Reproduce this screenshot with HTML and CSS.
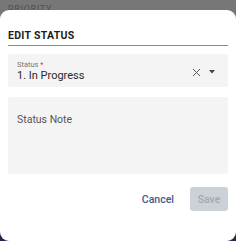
FILE: index.html
```html
<!DOCTYPE html>
<html lang="en">
  <head>
    <meta charset="UTF-8" />
    <meta name="viewport" content="width=device-width, initial-scale=1.0" />
    <title>Edit status</title>
    <link rel="stylesheet" href="styles.css">
  </head>
  <body>
    <div class="behind">
      <p class="behind-label">PRIORITY</p>
    </div>
    <section class="modal">
      <h2 class="title">EDIT STATUS</h2>
      <div class="field select">
        <div class="field-text">
          <p class="label">Status <span class="req">*</span></p>
          <p class="value">1. In Progress</p>
        </div>
        <svg class="clear" width="9" height="9" viewBox="0 0 9 9">
          <path d="M1 1 L8 8 M8 1 L1 8" stroke="#5a5a5a" stroke-width="1" fill="none" />
        </svg>
        <svg class="caret" width="6" height="4" viewBox="0 0 6 4">
          <path d="M0 0 L6 0 L3 3.5 Z" fill="#444" />
        </svg>
      </div>
      <div class="field note">
        <p class="placeholder">Status Note</p>
      </div>
      <div class="actions">
        <button class="cancel">Cancel</button>
        <button class="save" disabled>Save</button>
      </div>
    </section>
  </body>
</html>
```

FILE: styles.css
```css
* {
  margin: 0;
  padding: 0;
  box-sizing: border-box;
  font-family: Roboto, "Liberation Sans", sans-serif;
}

body {
  height: 241px;
  overflow: hidden;
  background: linear-gradient(#777777 50%, #1f2b45 50%);
}

/* page behind the overlay, mostly hidden */
.behind {
  height: 10px;
  overflow: hidden;
  padding-left: 8px;
}
.behind-label {
  padding-top: 4px;
  font-size: 9px;
  line-height: 10px;
  font-weight: 500;
  letter-spacing: 0.6px;
  color: #575757;
}

.modal {
  height: 231px;
  background-color: #fff;
  border-radius: 9px;
  padding: 0 8px;
}

.title {
  padding-top: 19px;
  padding-bottom: 3px;
  font-size: 10.5px;
  line-height: 13px;
  font-weight: 700;
  letter-spacing: 0.3px;
  color: #1c1c1c;
  border-bottom: 1px solid #8a8a8a;
}

.field {
  background-color: #f4f4f4;
  border-radius: 2px;
}

.select {
  margin-top: 8px;
  height: 33px;
  display: flex;
  align-items: center;
  padding: 0 13px 0 9px;
}
.field-text {
  flex: 1;
}
.label {
  font-size: 7.5px;
  line-height: 9px;
  color: #777;
}
.req {
  color: #d93434;
}
.value {
  font-size: 11px;
  line-height: 13px;
  color: #2a2a2a;
}
.clear {
  margin-top: 4px;
  margin-right: 8px;
}
.caret {
  margin-top: 3px;
}

.note {
  margin-top: 10px;
  height: 77px;
  padding: 16px 9px;
}
.placeholder {
  font-size: 10.5px;
  line-height: 13px;
  color: #555;
}

.actions {
  margin-top: 13px;
  display: flex;
  justify-content: flex-end;
  align-items: center;
  gap: 16px;
}
.actions button {
  border: none;
  outline: none;
  background: none;
  font-size: 10.5px;
  font-weight: 500;
}
.cancel {
  color: #3d5a8c;
}
.save {
  width: 38px;
  height: 24px;
  border-radius: 3px;
  background-color: #ccd1d7 !important;
  color: #a3a9b0;
}
```
